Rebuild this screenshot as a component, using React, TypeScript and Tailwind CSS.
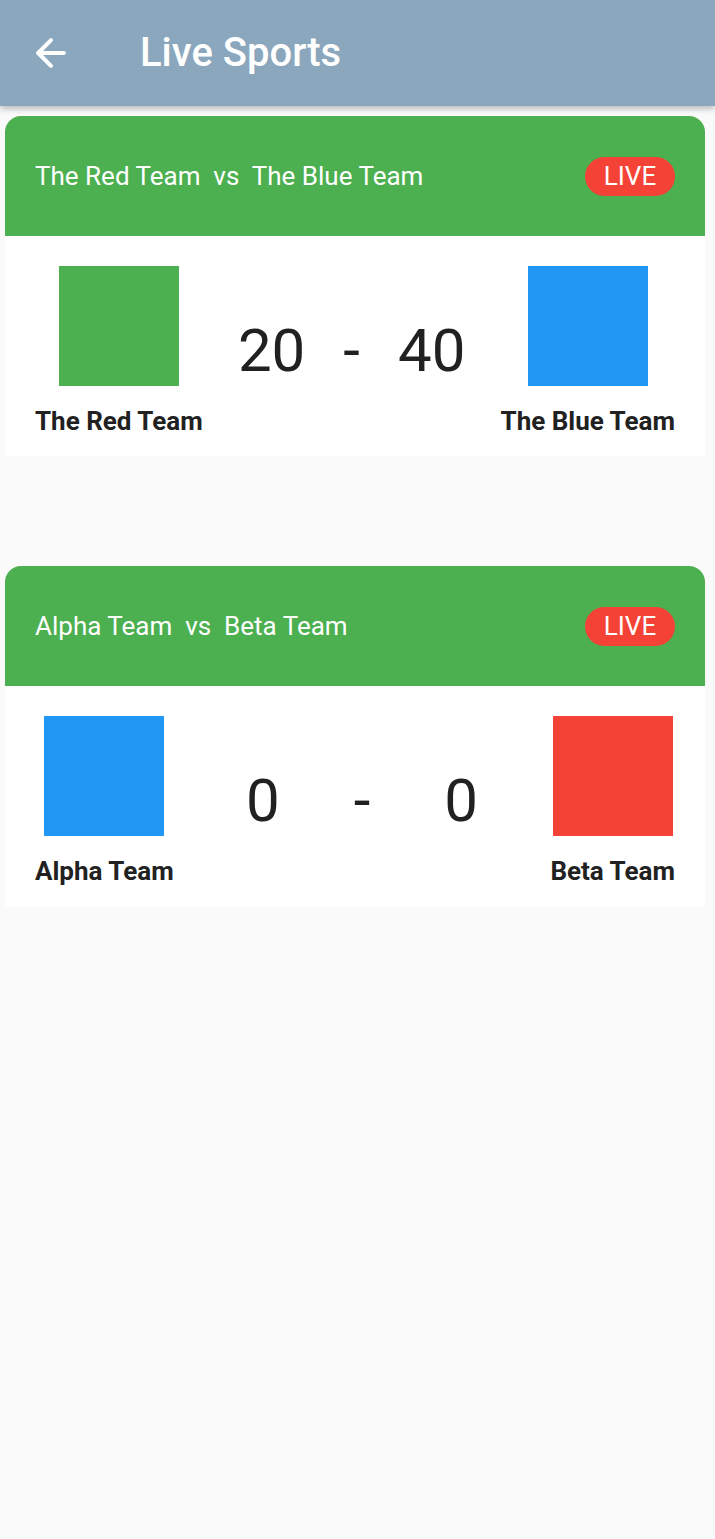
import { ArrowLeft } from 'lucide-react';

type Match = {
    home: string;
    away: string;
    homeColor: string;
    awayColor: string;
    homeScore: number;
    awayScore: number;
    scoreGap: string;
};

const matches: Match[] = [
    { home: 'The Red Team', away: 'The Blue Team', homeColor: 'bg-[#4caf50]', awayColor: 'bg-[#2196f3]', homeScore: 20, awayScore: 40, scoreGap: 'gap-[38px]' },
    { home: 'Alpha Team', away: 'Beta Team', homeColor: 'bg-[#2196f3]', awayColor: 'bg-[#f44336]', homeScore: 0, awayScore: 0, scoreGap: 'gap-[74px]' },
];

const TeamBlock = ({ name, color }: { name: string; color: string }) => (
    <div className="flex flex-col items-center">
        <div className={`w-[120px] h-[120px] ${color}`} />
        <p className="mt-[20px] text-[26px] leading-[30px] font-bold text-[#212121]">{name}</p>
    </div>
);

const MatchCard = ({ match }: { match: Match }) => (
    <div className="ml-[5px] mr-[10px]">
        <div className="h-[120px] bg-[#4caf50] rounded-t-[16px] flex items-center justify-between px-[30px]">
            <span className="text-white text-[26px] whitespace-pre">{`${match.home}  vs  ${match.away}`}</span>
            <span className="h-[39px] w-[90px] rounded-full bg-[#f44336] text-white text-[26px] flex items-center justify-center">LIVE</span>
        </div>
        <div className="bg-white px-[30px] pt-[30px] pb-[20px] flex items-center justify-between">
            <TeamBlock name={match.home} color={match.homeColor} />
            <div className={`flex items-center text-[60px] text-[#212121] ${match.scoreGap}`}>
                <span>{match.homeScore}</span>
                <span>-</span>
                <span>{match.awayScore}</span>
            </div>
            <TeamBlock name={match.away} color={match.awayColor} />
        </div>
    </div>
);

export default function App() {
    return (
        <div className="min-h-[1539px] bg-[#fafafa] font-['Roboto',sans-serif]">
            <div className="h-[106px] bg-[#8ba7bd] flex items-center shadow-[0_3px_6px_rgba(0,0,0,0.25)] relative">
                <div className="w-[48px] h-[48px] ml-[27px] flex items-center justify-center text-white">
                    <ArrowLeft size={44} strokeWidth={2.2} />
                </div>
                <h1 className="ml-[65px] text-white text-[40px] font-medium">Live Sports</h1>
            </div>
            <div className="pt-[10px] flex flex-col gap-[110px]">
                {matches.map((m) => (
                    <MatchCard key={m.home} match={m} />
                ))}
            </div>
        </div>
    );
}
